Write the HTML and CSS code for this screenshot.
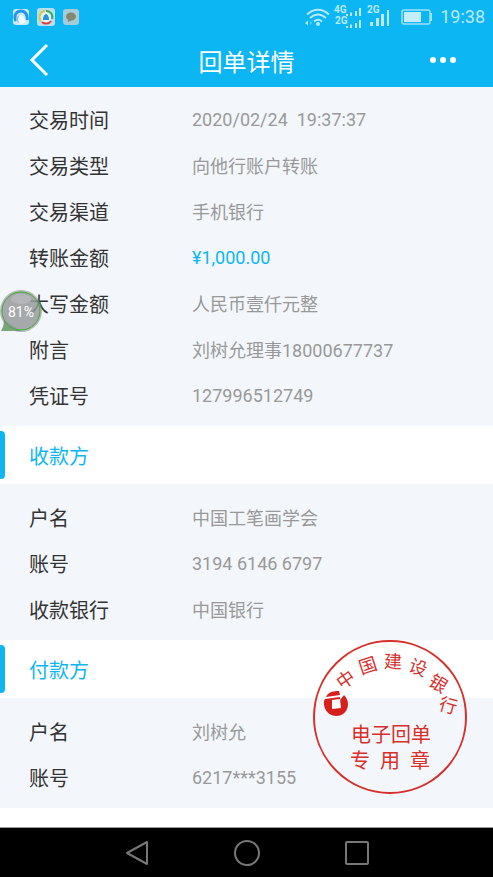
FILE: index.html
```html
<!DOCTYPE html>
<html lang="zh-CN">
<head>
<meta charset="UTF-8">
<meta name="viewport" content="width=device-width,initial-scale=1.0,user-scalable=no" />
<title>回单详情</title>
<link rel="stylesheet" href="styles.css">
</head>
<body>

<header class="header">
  <div class="status">
    <div class="notice">
      <svg width="16" height="16" viewBox="0 0 16 16">
        <rect width="16" height="16" rx="3" fill="#cdeaf8"/>
        <path d="M3 12C0 6 4 2 8 2C12 2 15 6 14 11" fill="none" stroke="#2196ee" stroke-width="3"/>
        <path d="M4 13C2 7 7 4 10 7C12 9 12 12 13 13C10 16 6 15 4 13Z" fill="#eef8fd"/>
        <path d="M3 8C3 11 4 14 7 14C4 12 5 8 7 6Z" fill="#7cc4f2"/>
      </svg>
      <svg width="18" height="18" viewBox="0 0 18 18">
        <rect width="18" height="18" rx="3" fill="#b9dfee"/>
        <circle cx="9" cy="9" r="6" fill="#e6f4fa"/>
        <path d="M9 3A6 6 0 0 1 15 11" fill="none" stroke="#2fae62" stroke-width="2"/>
        <path d="M14 13A6 6 0 0 1 5 14" fill="none" stroke="#d8403f" stroke-width="2"/>
        <path d="M4 13A6 6 0 0 1 8 3" fill="none" stroke="#d9c93c" stroke-width="2"/>
        <path d="M6 12C6 4 12 4 12 12Z" fill="#2c93d8"/>
      </svg>
      <svg width="16" height="16" viewBox="0 0 16 16">
        <rect width="16" height="16" rx="3" fill="#a3cbd8"/>
        <ellipse cx="8" cy="7.500" rx="5" ry="4" fill="#83886f"/>
        <path d="M5 10L5 13L9 11Z" fill="#83886f"/>
      </svg>
    </div>
    <div class="signal">
      <svg width="86" height="24" viewBox="0 0 86 24" fill="none">
        <g stroke="#b8e9fd" stroke-width="2">
          <path d="M4 9.500Q15 0 26 9.500"/>
          <path d="M7 13Q15 6 23 13"/>
          <path d="M11 16.500Q15 13 19 16.500"/>
        </g>
        <circle cx="15" cy="19" r="2" fill="#b8e9fd"/>
        <path d="M5 15.500V20.500L2 18Z" fill="#b8e9fd"/>
        <path d="M7 15.500V20.500L9 18Z" fill="#5fcdf8"/>
        <g class="net" fill="#b8e9fd">
          <text x="31" y="8">4G</text>
          <text x="32" y="19">2G</text>
          <text x="64" y="8">2G</text>
        </g>
        <g fill="#b8e9fd">
          <path d="M43 9h2v2h-2zM47 7.500h2v3.500h-2zM52 6h2v5h-2zM56 3h2v8h-2z"/>
          <path d="M43 21h2v2h-2zM47 19.500h2v3.500h-2zM52 18h2v5h-2zM56 15h2v8h-2z"/>
          <path d="M67 17h3v4h-3zM73 13h3v8h-3zM78 9h3v12h-3zM84 5h2v16h-2z"/>
        </g>
      </svg>
      <svg width="31" height="16" viewBox="0 0 31 16">
        <rect x="1" y="1" width="28" height="14" rx="2" fill="none" stroke="#9fe1fb" stroke-width="1.500"/>
        <path d="M3 3h17v10h-17z" fill="#c4edfd"/>
        <path d="M29 4h2v8h-2z" fill="#9fe1fb"/>
      </svg>
      <span class="clock">19:38</span>
    </div>
  </div>
  <div class="bar">
    <button type="button" class="back" aria-label="返回">
      <svg width="20" height="34" viewBox="0 0 20 34"><path d="M18 2L3 17L18 32" fill="none" stroke="#fff" stroke-width="3"/></svg>
    </button>
    <h1>回单详情</h1>
    <button type="button" class="more" aria-label="更多">
      <svg width="26" height="6" viewBox="0 0 26 6" fill="#fff"><circle cx="3" cy="3" r="3"/><circle cx="13" cy="3" r="3"/><circle cx="23" cy="3" r="3"/></svg>
    </button>
  </div>
</header>

<main class="main">
  <section class="box">
    <dl class="list">
      <div class="row"><dt>交易时间</dt><dd>2020/02/24&nbsp; 19:37:37</dd></div>
      <div class="row"><dt>交易类型</dt><dd>向他行账户转账</dd></div>
      <div class="row"><dt>交易渠道</dt><dd>手机银行</dd></div>
      <div class="row"><dt>转账金额</dt><dd class="money">¥1,000.00</dd></div>
      <div class="row"><dt>大写金额</dt><dd>人民币壹仟元整</dd></div>
      <div class="row"><dt>附言</dt><dd>刘树允理事18000677737</dd></div>
      <div class="row"><dt>凭证号</dt><dd>127996512749</dd></div>
    </dl>
  </section>

  <section class="box">
    <h2 class="hd">收款方</h2>
    <dl class="list">
      <div class="row"><dt>户名</dt><dd>中国工笔画学会</dd></div>
      <div class="row"><dt>账号</dt><dd>3194 6146 6797</dd></div>
      <div class="row"><dt>收款银行</dt><dd>中国银行</dd></div>
    </dl>
  </section>

  <section class="box">
    <h2 class="hd">付款方</h2>
    <dl class="list">
      <div class="row"><dt>户名</dt><dd>刘树允</dd></div>
      <div class="row"><dt>账号</dt><dd>6217***3155</dd></div>
    </dl>
    <!-- 电子回单章 -->
    <svg class="stamp" width="154" height="154" viewBox="0 0 154 154">
      <circle cx="77" cy="77" r="76" fill="none" stroke="#d6302c" stroke-width="2"/>
      <g class="arc">
        <text transform="translate(33 40) rotate(-35)" y="6">中</text>
        <text transform="translate(55 26) rotate(-18)" y="6">国</text>
        <text transform="translate(80 22) rotate(2)" y="6">建</text>
        <text transform="translate(105 28) rotate(20)" y="6">设</text>
        <text transform="translate(125 44) rotate(32)" y="6">银</text>
        <text transform="translate(135 66) rotate(16)" y="6">行</text>
      </g>
      <g class="line">
        <text x="78" y="102">电子回单</text>
        <text x="47" y="128">专</text>
        <text x="77" y="128">用</text>
        <text x="107" y="128">章</text>
      </g>
      <path d="M11 61C10 67 14 76 23 76C31 76 35 70 35 64C35 60 33 57 31 55L27 60V57L12 59Z" fill="#d6201c"/>
      <path d="M13 57C15 53 18 51 26 51L27 55Z" fill="#d6201c"/>
      <path d="M19 60L27 59L28 68L19 69Z" fill="#fff"/>
    </svg>
  </section>

  <div class="ball">
    <svg width="44" height="44" viewBox="0 0 44 44">
      <path d="M4 30C4 36 2 39 1 41H21Z" fill="#78a878"/>
      <circle cx="21" cy="21" r="21" fill="#8c8f91" fill-opacity=".6"/>
      <circle cx="21" cy="21" r="19" fill="#9c9fa1" fill-opacity=".6" stroke="#3fae2f" stroke-width="1"/>
      <ellipse cx="21" cy="9" rx="10" ry="5" fill="#fff" fill-opacity=".15"/>
    </svg>
    <span>81%</span>
  </div>
</main>

<nav class="keys">
  <button type="button" aria-label="后退"><svg width="24" height="26" viewBox="0 0 24 26"><path d="M22 2V24L2 13Z"/></svg></button>
  <button type="button" aria-label="主页"><svg width="26" height="26" viewBox="0 0 26 26"><circle cx="13" cy="13" r="12"/></svg></button>
  <button type="button" aria-label="任务"><svg width="24" height="24" viewBox="0 0 24 24"><rect x="1" y="1" width="22" height="22" rx="1"/></svg></button>
</nav>

</body>
</html>
```
FILE: styles.css
```css
*{ margin: 0; padding: 0; box-sizing: border-box; }
body{
  display: flex; flex-direction: column; min-height: 100vh;
  background: #fff; color: #333;
  font-family: Roboto, "Noto Sans CJK SC", sans-serif;
}
svg{ display: block; }
button{ border: 0; background: none; }

.header{ background: #0cb6f3; color: #fff; }
.status{ display: flex; justify-content: space-between; align-items: center; height: 33px; padding: 0 8px 0 13px; }
.notice{ display: flex; align-items: center; gap: 8px; }
.signal{ display: flex; align-items: center; gap: 12px; }
.net{ font-size: 10px; font-weight: bold; }
.clock{ margin-left: -4px; font-size: 18px; line-height: 24px; color: #b8e9fd; }
.bar{ display: grid; grid-template-columns: 80px 1fr 80px; align-items: center; height: 54px; }
.bar h1{ font-size: 24px; font-weight: normal; text-align: center; }
.back{ padding-left: 29px; }
.more{ padding-left: 17px; }

.main{ position: relative; flex: 1; border-bottom: 1px solid #999; }
.box{ position: relative; }
.hd{ position: relative; display: flex; align-items: center; height: 58px; padding-left: 29px; font-size: 20px; font-weight: normal; color: #0cb6f3; }
.hd:before{ content: ""; position: absolute; left: 0; top: 5px; bottom: 5px; width: 5px; border-radius: 0 4px 4px 0; background: #0cb6f3; }
.list{ padding: 10px 0 8px; background: #f3f7fb; }
.box:first-child .list{ padding-top: 9px; }
.row{ display: flex; align-items: center; height: 46px; padding-left: 29px; }
.row dt{ width: 163px; font-size: 20px; }
.row dd{ flex: 1; font-size: 18px; color: #999; }
.row .money{ color: #0cb6f3; }

.stamp{ position: absolute; right: 26px; top: 0; }
.stamp text{ fill: #d6302c; text-anchor: middle; font-family: "Noto Sans CJK SC", sans-serif; }
.arc{ font-size: 18px; }
.line{ font-size: 20px; }

.ball{ position: absolute; left: 0; top: 203px; }
.ball span{ position: absolute; left: 0; top: 0; width: 42px; line-height: 44px; font-size: 14px; text-align: center; color: #fff; }

.keys{ display: flex; justify-content: center; height: 49px; background: #000; }
.keys button{ display: flex; align-items: center; justify-content: center; width: 110px; }
.keys svg{ fill: none; stroke: #777; stroke-width: 2; stroke-linejoin: round; }
```
